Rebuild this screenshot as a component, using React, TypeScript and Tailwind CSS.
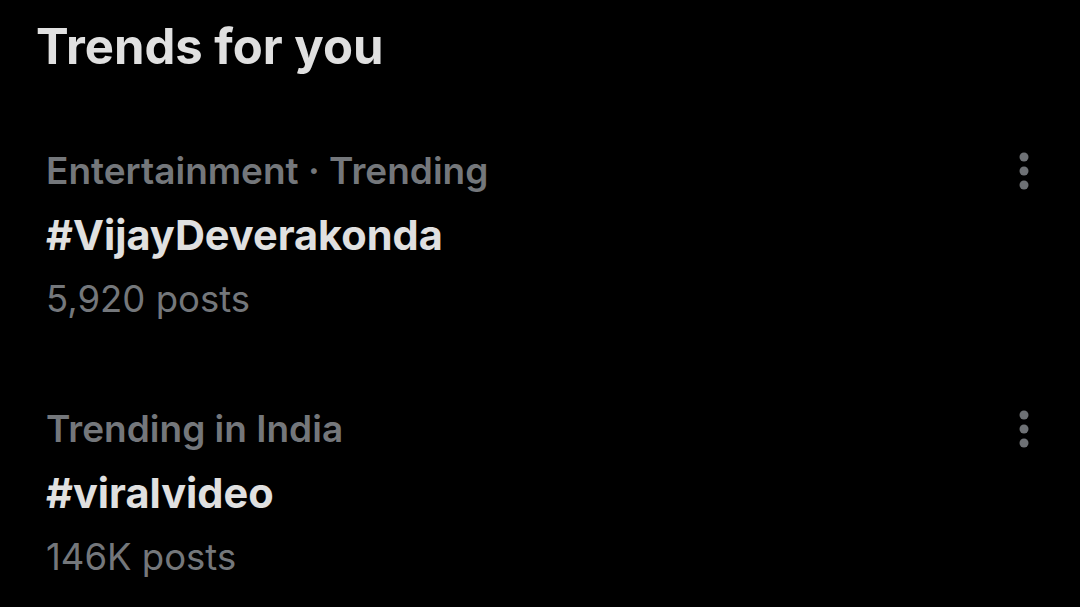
import React from "react";

function Dots() {
  return (
    <svg width="12" height="40" viewBox="0 0 12 40" className="mt-[12px]">
      <circle cx="6" cy="6" r="4.5" fill="#6e7175" />
      <circle cx="6" cy="20" r="4.5" fill="#6e7175" />
      <circle cx="6" cy="34" r="4.5" fill="#6e7175" />
    </svg>
  );
}

function Trend({ cat, tag, posts }: { cat: string; tag: string; posts: string }) {
  return (
    <div className="flex justify-between pl-[46px] pr-[50px]">
      <div className="flex flex-col">
        <div className="text-[37px] leading-[64px] font-semibold text-[#74777b]">{cat}</div>
        <div className="text-[41.5px] leading-[64px] font-bold text-[#e0e0e0]">{tag}</div>
        <div className="text-[36.5px] leading-[64px] font-normal text-[#74777b]">{posts}</div>
      </div>
      <Dots />
    </div>
  );
}

export default function App() {
  return (
    <div
      className="w-[1080px] h-[607px] bg-black overflow-hidden"
      style={{ fontFamily: "Inter, 'Noto Sans', sans-serif" }}
    >
      <div className="pl-[36px] pt-[15px] text-[49px] leading-[64px] font-bold text-[#e0e0e0]">
        Trends for you
      </div>
      <div className="mt-[60px]">
        <Trend cat="Entertainment · Trending" tag="#VijayDeverakonda" posts="5,920 posts" />
      </div>
      <div className="mt-[66px]">
        <Trend cat="Trending in India" tag="#viralvideo" posts="146K posts" />
      </div>
    </div>
  );
}
